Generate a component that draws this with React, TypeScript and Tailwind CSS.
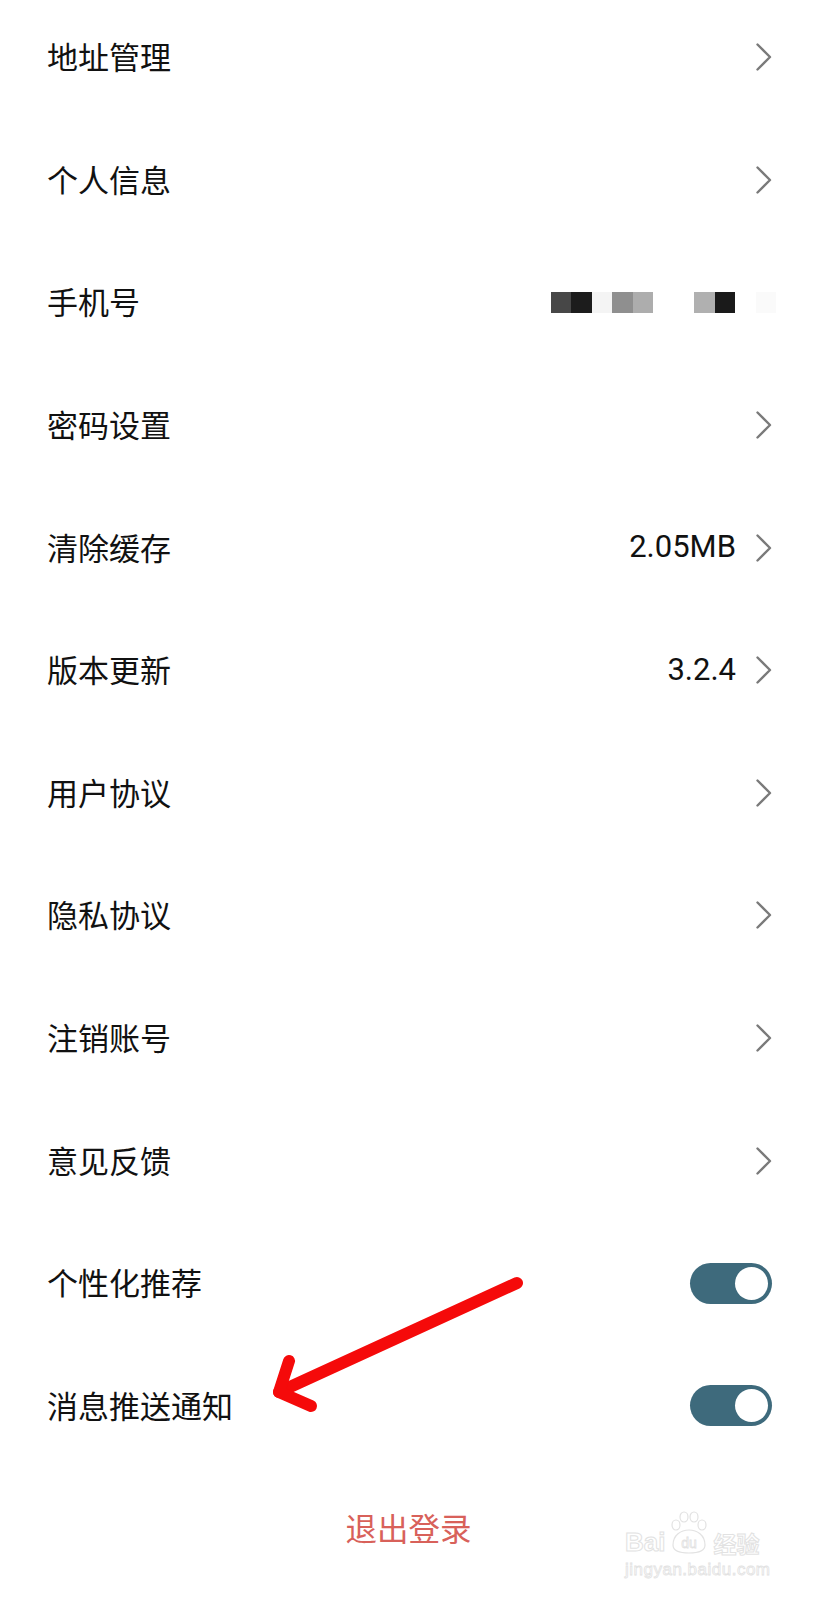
import type { ReactNode } from 'react';

type Item = {
  label: string;
  value?: string;
  kind: 'link' | 'phone' | 'toggle';
};

const items: Item[] = [
  { label: '地址管理', kind: 'link' },
  { label: '个人信息', kind: 'link' },
  { label: '手机号', kind: 'phone' },
  { label: '密码设置', kind: 'link' },
  { label: '清除缓存', value: '2.05MB', kind: 'link' },
  { label: '版本更新', value: '3.2.4', kind: 'link' },
  { label: '用户协议', kind: 'link' },
  { label: '隐私协议', kind: 'link' },
  { label: '注销账号', kind: 'link' },
  { label: '意见反馈', kind: 'link' },
  { label: '个性化推荐', kind: 'toggle' },
  { label: '消息推送通知', kind: 'toggle' },
];

const Chevron = () => (
  <svg width="16" height="28" viewBox="0 0 16 28" fill="none" className="shrink-0">
    <polyline points="1.5,1.5 14,14 1.5,26.5" stroke="#7a7a7a" strokeWidth="2.4" strokeLinecap="round" strokeLinejoin="round" />
  </svg>
);

const Toggle = () => (
  <div className="w-[82px] h-[41px] rounded-full bg-[#3e6a7c] flex items-center justify-end pr-[4px]">
    <div className="w-[33px] h-[33px] rounded-full bg-white" />
  </div>
);

// blurred phone number, drawn as pixel blocks
const PhoneMask = () => (
  <div className="flex mr-[-4px]">
    <div className="w-[20.5px] h-[20.5px] bg-[#474747]" />
    <div className="w-[20.5px] h-[20.5px] bg-[#1c1c1c]" />
    <div className="w-[20.5px] h-[20.5px] bg-[#f4f4f4]" />
    <div className="w-[20.5px] h-[20.5px] bg-[#8f8f8f]" />
    <div className="w-[20.5px] h-[20.5px] bg-[#adadad]" />
    <div className="w-[20.5px] h-[20.5px] bg-white" />
    <div className="w-[20.5px] h-[20.5px] bg-white" />
    <div className="w-[20.5px] h-[20.5px] bg-[#b0b0b0]" />
    <div className="w-[20.5px] h-[20.5px] bg-[#1a1a1a]" />
    <div className="w-[20.5px] h-[20.5px] bg-white" />
    <div className="w-[20.5px] h-[20.5px] bg-[#fafafa]" />
  </div>
);

const Row = ({ item }: { item: Item }) => {
  let right: ReactNode = null;
  if (item.kind === 'toggle') right = <Toggle />;
  else if (item.kind === 'phone') right = <PhoneMask />;
  else
    right = (
      <div className="flex items-center gap-[20px]">
        {item.value && <span className="text-[31px] text-[#111]">{item.value}</span>}
        <Chevron />
      </div>
    );

  return (
    <div className="h-[122.6px] flex items-center justify-between pl-[47px] pr-[45px]">
      <span className="text-[31px] text-[#111] leading-none pt-[3px]">{item.label}</span>
      {right}
    </div>
  );
};

export default function App() {
  return (
    <div className="relative w-full min-h-[1600px] bg-white overflow-hidden font-['Roboto','Noto_Sans_CJK_SC',sans-serif]">
      <div className="mt-[-4px]">
        {items.map((item) => (
          <Row key={item.label} item={item} />
        ))}
      </div>
      <div className="h-[126px] flex items-center justify-center">
        <span className="text-[31.5px] text-[#d8615a] leading-none pt-[2px]">退出登录</span>
      </div>

      {/* red annotation arrow */}
      <svg className="absolute left-0 top-0 pointer-events-none" width="817" height="1600" viewBox="0 0 817 1600">
        <g stroke="#f50a0a" strokeWidth="12" strokeLinecap="round" strokeLinejoin="round" fill="none">
          <line x1="517" y1="1283" x2="279" y2="1392" />
          <polyline points="289,1361 279,1392 311,1406" />
        </g>
      </svg>

      {/* watermark */}
      <div className="absolute left-[625px] top-[1511px] flex flex-col items-start pointer-events-none">
        <div className="flex items-end h-[44px]">
          <span className="text-[26px] leading-none font-bold text-white font-['Liberation_Sans',sans-serif] [-webkit-text-stroke:1px_#e2e2e2]">Bai</span>
          <svg width="48" height="44" viewBox="0 0 48 44" fill="none" stroke="#e2e2e2" strokeWidth="1.2">
            <ellipse cx="11" cy="14" rx="4" ry="5" />
            <ellipse cx="19" cy="6" rx="4" ry="5" />
            <ellipse cx="29" cy="6" rx="4" ry="5" />
            <ellipse cx="37" cy="14" rx="4" ry="5" />
            <path d="M8 34 C8 24 16 19 24 19 C32 19 40 24 40 34 C40 40 34 42 24 42 C14 42 8 40 8 34 Z" />
            <text x="24" y="37" textAnchor="middle" fontSize="14" fontFamily="Liberation Sans" fill="white" stroke="#e2e2e2" strokeWidth="0.8">du</text>
          </svg>
          <span className="text-[23px] leading-none font-bold text-white font-['Noto_Sans_CJK_SC',sans-serif] [-webkit-text-stroke:1px_#e2e2e2]">经验</span>
        </div>
        <span className="mt-[6px] text-[17px] leading-none text-white tracking-[0.5px] font-['Liberation_Sans',sans-serif] [-webkit-text-stroke:0.8px_#e2e2e2]">jingyan.baidu.com</span>
      </div>
    </div>
  );
}
